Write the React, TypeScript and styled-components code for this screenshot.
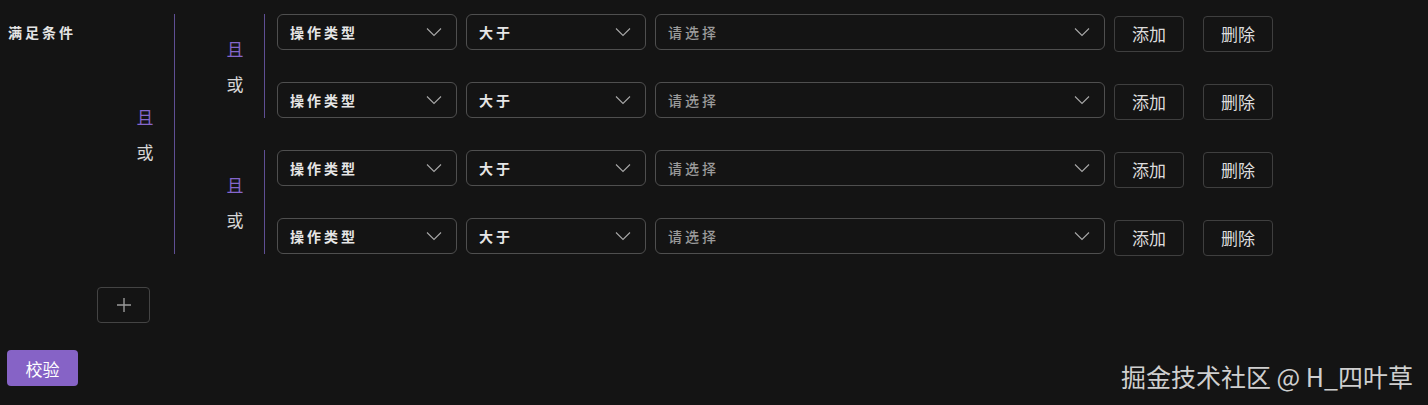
import React from "react";
import styled, { createGlobalStyle } from "styled-components";

const GlobalStyle = createGlobalStyle`
  html, body {
    margin: 0;
    padding: 0;
    background: #141414;
  }
  body {
    font-family: "Noto Sans CJK SC", "Noto Sans", sans-serif;
    color: #d9d9d9;
  }
`;

const Page = styled.div`
  position: relative;
  box-sizing: border-box;
  width: 1428px;
  height: 405px;
  padding: 14px 0 0 7px;
  background: #141414;
`;

const RuleArea = styled.div`
  display: flex;
  align-items: flex-start;
`;

const Title = styled.div`
  width: 109px;
  height: 36px;
  line-height: 36px;
  font-size: 14px;
  font-weight: 700;
  letter-spacing: 3px;
  color: #e4e4e4;
  padding-left: 1px;
  box-sizing: border-box;
`;

const Group = styled.div`
  display: flex;
  align-items: stretch;
`;

const Relation = styled.div`
  width: 58px;
  display: flex;
  flex-direction: column;
  align-items: center;
  justify-content: center;
  gap: 11px;
`;

const RelationItem = styled.span<{ $active?: boolean }>`
  font-size: 17px;
  line-height: 24px;
  color: ${({ $active }) => ($active ? "#8466cc" : "#d6d6d6")};
`;

const Children = styled.div<{ $indent: number }>`
  display: flex;
  flex-direction: column;
  gap: 32px;
  border-left: 1px solid #5f4f94;
  padding-left: ${({ $indent }) => $indent}px;
`;

const Row = styled.div`
  display: flex;
  align-items: center;
  height: 36px;
  gap: 9px;
`;

const Select = styled.div<{ $width: number }>`
  box-sizing: border-box;
  width: ${({ $width }) => $width}px;
  height: 36px;
  border: 1px solid #4f4f4f;
  border-radius: 6px;
  display: flex;
  align-items: center;
  justify-content: space-between;
  padding: 0 14px 0 12px;
`;

const SelectText = styled.span<{ $placeholder?: boolean }>`
  font-size: 14px;
  letter-spacing: 3px;
  font-weight: ${({ $placeholder }) => ($placeholder ? 500 : 700)};
  color: ${({ $placeholder }) => ($placeholder ? "#9a9a9a" : "#e6e6e6")};
`;

const Button = styled.button<{ $gapLeft?: number }>`
  box-sizing: border-box;
  width: 70px;
  height: 36px;
  margin-left: ${({ $gapLeft }) => $gapLeft ?? 0}px;
  margin-top: 3px;
  border: 1px solid #3f3f3f;
  border-radius: 4px;
  background: transparent;
  color: #dcdcdc;
  font-family: "Noto Sans CJK SC", sans-serif;
  font-size: 17px;
  padding: 0;
  cursor: pointer;
`;

const AddGroupButton = styled.button`
  box-sizing: border-box;
  display: flex;
  align-items: center;
  justify-content: center;
  width: 53px;
  height: 36px;
  margin: 33px 0 0 90px;
  border: 1px solid #444;
  border-radius: 4px;
  background: transparent;
  padding: 0;
`;

const SubmitButton = styled.button`
  display: block;
  box-sizing: border-box;
  width: 71px;
  height: 36px;
  margin-top: 27px;
  border: none;
  border-radius: 4px;
  background: #8663c6;
  color: #fff;
  font-family: "Noto Sans CJK SC", sans-serif;
  font-size: 17px;
  padding: 0;
`;

const Watermark = styled.div`
  position: absolute;
  right: 15px;
  bottom: 11px;
  font-size: 25px;
  color: #cfcfcf;
  font-family: "Noto Sans CJK SC", sans-serif;
`;

const Chevron = () => (
  <svg width="16" height="10" viewBox="0 0 16 10" fill="none">
    <path d="M1 1.5 L8 8.5 L15 1.5" stroke="#a8a8a8" strokeWidth="1.1" />
  </svg>
);

const Plus = () => (
  <svg width="16" height="16" viewBox="0 0 16 16" fill="none">
    <path d="M8 1 V15 M1 8 H15" stroke="#9a9a9a" strokeWidth="1.4" />
  </svg>
);

const RelationSwitch = () => (
  <Relation>
    <RelationItem $active>且</RelationItem>
    <RelationItem>或</RelationItem>
  </Relation>
);

const ConditionRow = () => (
  <Row>
    <Select $width={180}>
      <SelectText>操作类型</SelectText>
      <Chevron />
    </Select>
    <Select $width={180}>
      <SelectText>大于</SelectText>
      <Chevron />
    </Select>
    <Select $width={450}>
      <SelectText $placeholder>请选择</SelectText>
      <Chevron />
    </Select>
    <Button>添加</Button>
    <Button $gapLeft={10}>删除</Button>
  </Row>
);

const ConditionGroup = () => (
  <Group>
    <RelationSwitch />
    <Children $indent={12}>
      <ConditionRow />
      <ConditionRow />
    </Children>
  </Group>
);

export default function App() {
  return (
    <>
      <GlobalStyle />
      <Page>
        <RuleArea>
          <Title>满足条件</Title>
          <Group>
            <RelationSwitch />
            <Children $indent={31}>
              <ConditionGroup />
              <ConditionGroup />
            </Children>
          </Group>
        </RuleArea>
        <AddGroupButton>
          <Plus />
        </AddGroupButton>
        <SubmitButton>校验</SubmitButton>
        <Watermark>掘金技术社区 @ H_四叶草</Watermark>
      </Page>
    </>
  );
}
